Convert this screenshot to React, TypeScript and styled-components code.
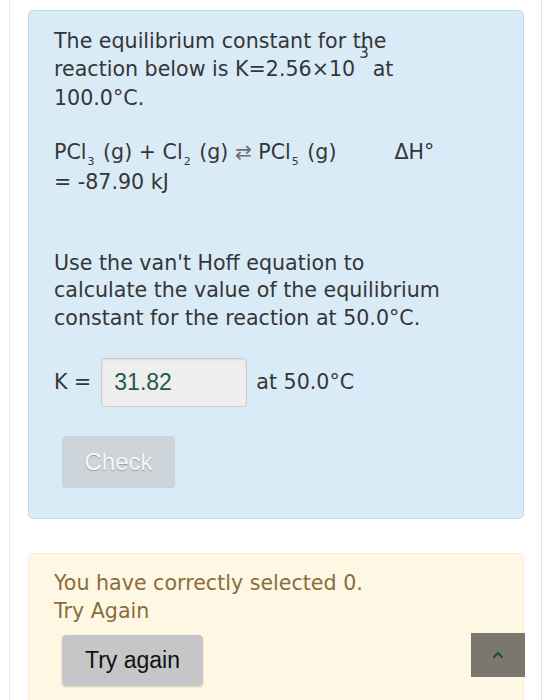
import React from 'react';
import styled, { createGlobalStyle } from 'styled-components';

const GlobalStyle = createGlobalStyle`
  html, body {
    margin: 0;
    padding: 0;
    background: #ffffff;
  }
`;

const Page = styled.div`
  margin: 0 5px 0 9px;
  min-height: 700px;
  border-left: 1px solid #ececec;
  border-right: 1px solid #e4e4e4;
  padding: 10px 17px 0 18px;
  box-sizing: border-box;
`;

const Panel = styled.div<{ $tone: 'info' | 'warning' }>`
  border-radius: 5px;
  border: 1px solid ${p => (p.$tone === 'info' ? '#bfddf0' : '#fbefd6')};
  background: ${p => (p.$tone === 'info' ? '#d9ebf7' : '#fef7e4')};
  color: ${p => (p.$tone === 'info' ? '#363636' : '#8a6d3b')};
  padding: ${p => (p.$tone === 'info' ? '17px 25px 31px 25px' : '16px 25px 30px 25px')};
  margin-bottom: 34px;
  font-family: 'DejaVu Sans', Verdana, sans-serif;
  font-size: 20.6px;
  line-height: 27.5px;
`;

const Para = styled.p`
  margin: 0;
`;

const Blank = styled.div<{ $lines: number }>`
  height: ${p => p.$lines * 27 - 1}px;
`;

const Exponent = styled.span`
  position: relative;
  top: -18px;
  font-size: 15px;
  margin: 0 4px 0 4px;
`;

const Sub = styled.span`
  position: relative;
  top: 6px;
  font-size: 11px;
  margin: 0 2px 0 1px;
`;

const Arrow = styled.span`
  color: #6e6e6e;
  font-size: 20px;
`;

const Gap = styled.span`
  display: inline-block;
  width: 58px;
`;

const AnswerRow = styled.div`
  display: flex;
  align-items: center;
  margin-top: 26px;
`;

const Label = styled.span`
  margin-right: 10px;
`;

const Field = styled.div`
  width: 146px;
  height: 49px;
  box-sizing: border-box;
  border: 1px solid #cbcbcb;
  border-radius: 4px;
  background: #eeeeee;
  box-shadow: inset 0 1px 2px rgba(0, 0, 0, 0.08);
  display: flex;
  align-items: center;
  padding-left: 12px;
  font-family: 'Liberation Sans', Arial, sans-serif;
  font-size: 23px;
  color: #1c5b48;
`;

const Unit = styled.span`
  margin-left: 9px;
`;

const Button = styled.button<{ $variant: 'check' | 'retry' }>`
  display: block;
  margin-left: 8px;
  border: none;
  border-radius: 4px;
  font-family: 'Liberation Sans', Arial, sans-serif;
  cursor: pointer;
  padding: 0;
  ${p =>
    p.$variant === 'check'
      ? `
    margin-top: 29px;
    width: 113px;
    height: 51px;
    background: #cdd4da;
    color: #f7f7f7;
    font-size: 24px;
    text-shadow: 0 1px 1px rgba(0,0,0,0.25);
    box-shadow: 0 1px 1px rgba(0,0,0,0.12);
  `
      : `
    margin-top: 10px;
    width: 141px;
    height: 50px;
    background: #c6c6c8;
    color: #111111;
    font-size: 23px;
    box-shadow: 0 2px 2px rgba(0,0,0,0.18);
  `}
`;

const TopButton = styled.button`
  position: fixed;
  right: 22px;
  bottom: 23px;
  width: 54px;
  height: 44px;
  border: none;
  background: #7a776e;
  display: flex;
  align-items: center;
  justify-content: center;
  padding: 0;
`;

export default function App() {
  return (
    <>
      <GlobalStyle />
      <Page>
        <Panel $tone="info">
          <Para>
            The equilibrium constant for the
            <br />
            reaction below is K=2.56×10<Exponent>3</Exponent>at
            <br />
            100.0°C.
          </Para>
          <Blank $lines={1} />
          <Para>
            PCl<Sub>3</Sub> (g) + Cl<Sub>2</Sub> (g) <Arrow>⇄</Arrow> PCl<Sub>5</Sub> (g)
            <Gap />
            ΔH°
            <br />= -87.90 kJ
          </Para>
          <Blank $lines={2} />
          <Para>
            Use the van't Hoff equation to
            <br />
            calculate the value of the equilibrium
            <br />
            constant for the reaction at 50.0°C.
          </Para>
          <AnswerRow>
            <Label>K =</Label>
            <Field>31.82</Field>
            <Unit>at 50.0°C</Unit>
          </AnswerRow>
          <Button $variant="check" disabled>
            Check
          </Button>
        </Panel>
        <Panel $tone="warning">
          <Para>
            You have correctly selected 0.
            <br />
            Try Again
          </Para>
          <Button $variant="retry">Try again</Button>
        </Panel>
      </Page>
      <TopButton aria-label="Back to top">
        <svg width="12" height="8" viewBox="0 0 12 8">
          <path d="M1.5 6.5 L6 2 L10.5 6.5" fill="none" stroke="#14503f" strokeWidth="2" />
        </svg>
      </TopButton>
    </>
  );
}
